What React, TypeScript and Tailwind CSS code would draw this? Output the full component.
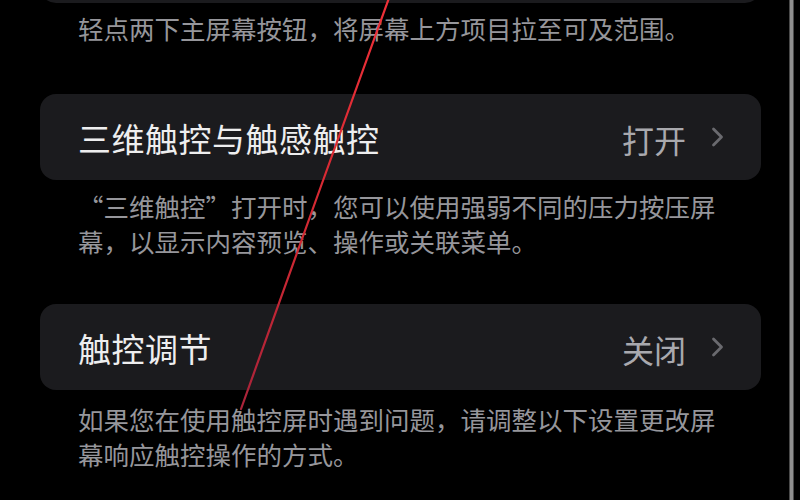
import React from "react";

const cjk = { fontFamily: '"Noto Sans CJK SC", "Noto Sans", sans-serif' };

function Chevron() {
  return (
    <svg width="13" height="20" viewBox="0 0 13 20" className="shrink-0">
      <path d="M2.5 2 L10.5 10 L2.5 18" fill="none" stroke="#6a6a6f" strokeWidth="2.8" strokeLinecap="round" strokeLinejoin="round" />
    </svg>
  );
}

function Row({ title, value }: { title: string; value: string }) {
  return (
    <div className="h-[86px] rounded-[16px] bg-[#1b1b1e] flex items-center pl-[38px] pr-[37px]">
      <span className="text-[33px] leading-none text-[#eeeeef] tracking-[0.5px] pt-[4px]">{title}</span>
      <span className="ml-auto text-[32px] leading-none text-[#a9a9ae] pt-[4px]">{value}</span>
      <span className="ml-[25px] pt-[1px]">
        <Chevron />
      </span>
    </div>
  );
}

function Footer({ lines, className }: { lines: string[]; className: string }) {
  return (
    <div className={"pl-[38px] text-[25.5px] leading-[35.5px] text-[#96969b] " + className}>
      {lines.map((l) => (
        <div key={l} className="whitespace-nowrap">
          {l}
        </div>
      ))}
    </div>
  );
}

export default function App() {
  return (
    <div className="relative w-[800px] h-[500px] overflow-hidden bg-black flex" style={cjk}>
      <div className="ml-[40px] w-[721px] flex flex-col">
        {/* tail of the group above */}
        <div className="h-[86px] -mt-[83px] rounded-[16px] bg-[#1b1b1e]" />
        <Footer className="pt-[7px]" lines={["轻点两下主屏幕按钮，将屏幕上方项目拉至可及范围。"]} />

        <div className="mt-[48px]">
          <Row title="三维触控与触感触控" value="打开" />
        </div>
        <Footer
          className="pt-[8px]"
          lines={["“三维触控”打开时，您可以使用强弱不同的压力按压屏", "幕，以显示内容预览、操作或关联菜单。"]}
        />

        <div className="mt-[45px]">
          <Row title="触控调节" value="关闭" />
        </div>
        <Footer
          className="pt-[11px]"
          lines={["如果您在使用触控屏时遇到问题，请调整以下设置更改屏", "幕响应触控操作的方式。"]}
        />
      </div>

      {/* device frame edge */}
      <div className="ml-auto mr-[6px] w-[5px] h-full flex">
        <div className="w-[1px] bg-[#4a4a4a]" />
        <div className="w-[3px] bg-[#8e8e8e]" />
        <div className="w-[1px] bg-[#4a4a4a]" />
      </div>

      {/* hand-drawn red stroke */}
      <svg className="absolute inset-0 pointer-events-none" width="800" height="500" viewBox="0 0 800 500">
        <defs>
          <linearGradient id="stroke" x1="0" y1="0" x2="0" y2="1">
            <stop offset="0" stopColor="#ef3038" />
            <stop offset="0.6" stopColor="#d02832" />
            <stop offset="1" stopColor="#a8233a" />
          </linearGradient>
        </defs>
        <path d="M389 -2 L316 200 L241 409" fill="none" stroke="url(#stroke)" strokeWidth="2.2" strokeLinecap="round" />
      </svg>
    </div>
  );
}
